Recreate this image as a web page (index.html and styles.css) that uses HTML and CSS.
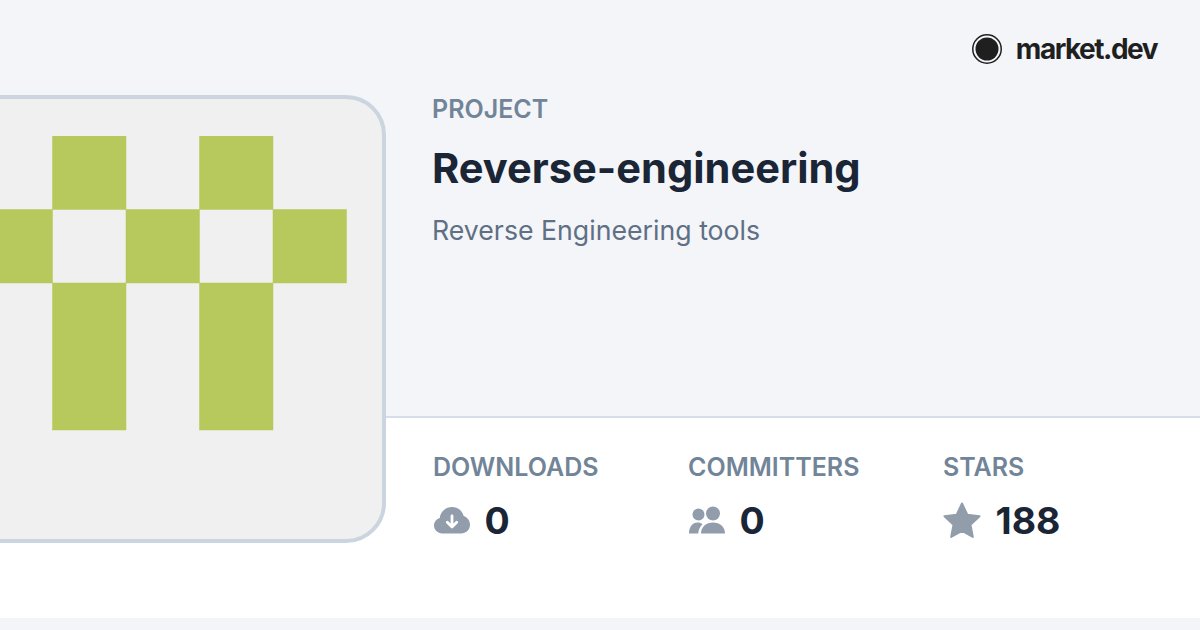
FILE: index.html
```html
<!DOCTYPE html>
<html lang="en">
<head>
    <meta charset="UTF-8">
    <title>Reverse-engineering</title>
    <link rel="stylesheet" href="styles.css">
</head>
<body>
    <div class="card">
        <svg class="identicon" viewBox="0 0 5 5" width="367.5" height="367.5">
            <g fill="#b7c95c" stroke="#b7c95c" stroke-width="0.007">
                <rect x="1" y="0" width="1" height="1"/>
                <rect x="3" y="0" width="1" height="1"/>
                <rect x="0" y="1" width="1" height="1"/>
                <rect x="2" y="1" width="1" height="1"/>
                <rect x="4" y="1" width="1" height="1"/>
                <rect x="1" y="2" width="1" height="2"/>
                <rect x="3" y="2" width="1" height="2"/>
            </g>
        </svg>
    </div>
    <header class="top">
        <div class="brand">
            <svg class="brand-logo" viewBox="0 0 30 30" width="30" height="30">
                <circle cx="15" cy="15" r="14.25" fill="none" stroke="#1f1f1f" stroke-width="1.5"/>
                <circle cx="15" cy="15" r="11.5" fill="#1f1f1f"/>
            </svg>
            <span class="brand-name">market.dev</span>
        </div>
        <div class="kicker">PROJECT</div>
        <h1 class="title">Reverse-engineering</h1>
        <p class="desc">Reverse Engineering tools</p>
    </header>
    <section class="stats">
        <div class="stat stat-downloads">
            <div class="stat-label">DOWNLOADS</div>
            <div class="stat-value">
                <svg class="icon" viewBox="0 0 36 28" width="36" height="28">
                    <path fill="#929dac" fill-rule="evenodd" d="M8.2 27.5C3.7 27.5 0 24 0 19.6c0-3.6 2.4-6.6 5.8-7.6C6.4 5.800 11.500 1 18 1c5.700 0 10.500 3.800 11.700 9.100 3.600 1.100 6.300 4.700 6.300 8.600 0 4.900-4 8.800-9 8.800z"/>
                    <path fill="none" stroke="#fff" stroke-width="2.800" stroke-linecap="round" stroke-linejoin="round" d="M18 10v10.500M13.300 16.300l4.700 4.700 4.700-4.700"/>
                </svg>
                <span>0</span>
            </div>
        </div>
        <div class="stat stat-committers">
            <div class="stat-label">COMMITTERS</div>
            <div class="stat-value">
                <svg class="icon" viewBox="0 0 36 28" width="36" height="28">
                    <g fill="#929dac">
                        <circle cx="9.500" cy="8.500" r="6"/>
                        <circle cx="24" cy="7.500" r="7"/>
                        <path d="M0 27.500c0-6.500 3.500-11 8.500-11 2 0 3.700.6 5 1.800-2.400 2.300-3.900 5.500-4.300 9.200z"/>
                        <path d="M12 27.500c0-6.500 5-11 12-11s12 4.500 12 11z"/>
                    </g>
                </svg>
                <span>0</span>
            </div>
        </div>
        <div class="stat stat-stars">
            <div class="stat-label">STARS</div>
            <div class="stat-value">
                <svg class="icon icon-star" viewBox="0 0 38 36" width="38" height="36">
                    <path fill="#929dac" stroke="#929dac" stroke-width="2" stroke-linejoin="round" d="M19 1.500l5.300 11.200 12.200 1.600-9 8.500 2.300 12.200L19 29l-10.800 6 2.300-12.200-9-8.500 12.200-1.600z"/>
                </svg>
                <span>188</span>
            </div>
        </div>
    </section>
</body>
</html>
```

FILE: styles.css
```css
html, body {
    margin: 0;
    padding: 0;
}
body {
    position: relative;
    width: 1200px;
    height: 630px;
    overflow: hidden;
    background-color: #f3f5f9;
    font-family: Inter, "Liberation Sans", sans-serif;
}

.top {
    box-sizing: border-box;
    height: 418px;
    padding: 33px 43px 0 432px;
    border-bottom: 2px solid #d6deea;
}
.brand {
    display: flex;
    justify-content: flex-end;
    align-items: center;
    gap: 14px;
    height: 32px;
}
.brand-name {
    font-size: 28px;
    font-weight: 700;
    letter-spacing: -1.5px;
    color: #1f1f1f;
}
.kicker {
    margin-top: 29px;
    font-size: 25px;
    line-height: 30px;
    font-weight: 600;
    color: #718498;
}
.title {
    margin: 20px 0 0;
    font-size: 41.6px;
    line-height: 48px;
    font-weight: 700;
    color: #1a2535;
}
.desc {
    margin: 20px 0 0;
    font-size: 26.7px;
    line-height: 36px;
    color: #5f6f84;
}

.stats {
    display: flex;
    box-sizing: border-box;
    height: 200px;
    padding: 34px 0 0 433px;
    background-color: #ffffff;
}
.stat {
    width: 255px;
}
.stat-label {
    font-size: 25px;
    line-height: 30px;
    font-weight: 600;
    color: #718498;
}
.stat-value {
    display: flex;
    align-items: center;
    gap: 14.6px;
    margin-top: 14px;
    height: 48px;
    font-size: 37.4px;
    font-weight: 700;
    color: #1a2535;
}
.icon {
    margin-left: 1px;
}
.icon-star {
    margin-left: 0;
}

.card {
    position: absolute;
    left: -62px;
    top: 95px;
    box-sizing: border-box;
    width: 448px;
    height: 448px;
    padding: 37px;
    border: 4px solid #cbd5e0;
    border-radius: 40px;
    background-color: #f0f0f0;
}
.identicon {
    display: block;
}
```
